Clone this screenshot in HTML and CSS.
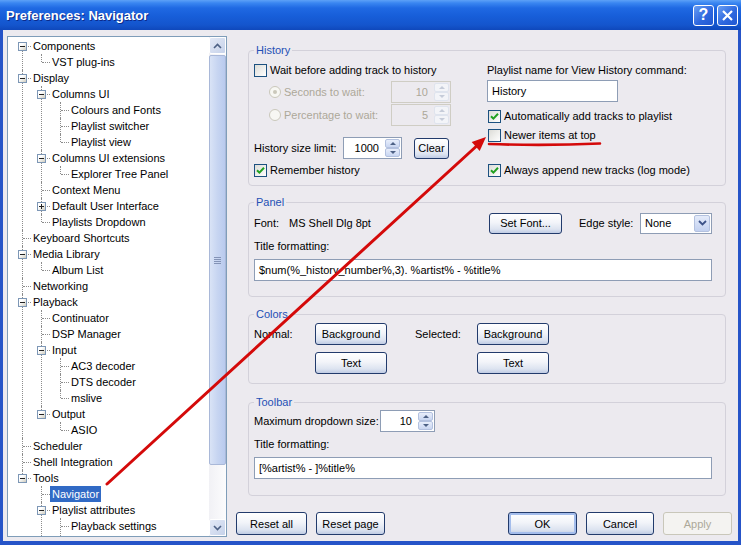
FILE: index.html
```html
<!DOCTYPE html>
<html lang="en">
<head>
	<meta charset="UTF-8">
	<title>Preferences: Navigator</title>
	<link rel="stylesheet" href="styles.css">
</head>
<body>
<div class="window">
	<div class="titlebar">
		<span class="title">Preferences: Navigator</span>
		<span class="capbtn">?</span>
		<span class="capbtn"><svg width="13" height="13" viewBox="0 0 13 13"><path d="M2 2L11 11M11 2L2 11" stroke="#fff" stroke-width="2.2"/></svg></span>
	</div>
	<div class="client">
		<div class="treebox">
			<div class="treeview">
				<ul class="tree root">
					<li><div class="row"><span class="exp minus"></span><span class="txt">Components</span></div>
						<ul><li class="last"><div class="row"><span class="txt">VST plug-ins</span></div></li></ul>
					</li>
					<li><div class="row"><span class="exp minus"></span><span class="txt">Display</span></div>
						<ul>
							<li><div class="row"><span class="exp minus"></span><span class="txt">Columns UI</span></div>
								<ul>
									<li><div class="row"><span class="txt">Colours and Fonts</span></div></li>
									<li><div class="row"><span class="txt">Playlist switcher</span></div></li>
									<li class="last"><div class="row"><span class="txt">Playlist view</span></div></li>
								</ul>
							</li>
							<li><div class="row"><span class="exp minus"></span><span class="txt">Columns UI extensions</span></div>
								<ul><li class="last"><div class="row"><span class="txt">Explorer Tree Panel</span></div></li></ul>
							</li>
							<li><div class="row"><span class="txt">Context Menu</span></div></li>
							<li><div class="row"><span class="exp plus"></span><span class="txt">Default User Interface</span></div></li>
							<li class="last"><div class="row"><span class="txt">Playlists Dropdown</span></div></li>
						</ul>
					</li>
					<li><div class="row"><span class="txt">Keyboard Shortcuts</span></div></li>
					<li><div class="row"><span class="exp minus"></span><span class="txt">Media Library</span></div>
						<ul><li class="last"><div class="row"><span class="txt">Album List</span></div></li></ul>
					</li>
					<li><div class="row"><span class="txt">Networking</span></div></li>
					<li><div class="row"><span class="exp minus"></span><span class="txt">Playback</span></div>
						<ul>
							<li><div class="row"><span class="txt">Continuator</span></div></li>
							<li><div class="row"><span class="txt">DSP Manager</span></div></li>
							<li><div class="row"><span class="exp minus"></span><span class="txt">Input</span></div>
								<ul>
									<li><div class="row"><span class="txt">AC3 decoder</span></div></li>
									<li><div class="row"><span class="txt">DTS decoder</span></div></li>
									<li class="last"><div class="row"><span class="txt">mslive</span></div></li>
								</ul>
							</li>
							<li class="last"><div class="row"><span class="exp minus"></span><span class="txt">Output</span></div>
								<ul><li class="last"><div class="row"><span class="txt">ASIO</span></div></li></ul>
							</li>
						</ul>
					</li>
					<li><div class="row"><span class="txt">Scheduler</span></div></li>
					<li><div class="row"><span class="txt">Shell Integration</span></div></li>
					<li class="last"><div class="row"><span class="exp minus"></span><span class="txt">Tools</span></div>
						<ul>
							<li class="sel"><div class="row"><span class="txt">Navigator</span></div></li>
							<li class="more"><div class="row"><span class="exp minus"></span><span class="txt">Playlist attributes</span></div>
								<ul><li class="more"><div class="row"><span class="txt">Playback settings</span></div></li></ul>
							</li>
						</ul>
					</li>
				</ul>
			</div>
			<div class="vscroll">
				<span class="sbtn"><svg width="9" height="6" viewBox="0 0 9 6"><path d="M1 5L4.5 1.5L8 5" stroke="#4d6185" stroke-width="1.6" fill="none"/></svg></span>
				<span class="thumb"><span class="grip"></span></span>
				<span class="track"></span>
				<span class="sbtn"><svg width="9" height="6" viewBox="0 0 9 6"><path d="M1 1L4.5 4.5L8 1" stroke="#4d6185" stroke-width="1.6" fill="none"/></svg></span>
			</div>
		</div>

		<div class="page">
			<fieldset class="group g-history">
				<legend>History</legend>
				<div class="cols">
					<div class="col-left">
						<div class="check"><span class="cb"></span>Wait before adding track to history</div>
						<div class="opt r1 disabled"><span class="radio on"></span><span class="opt-lbl">Seconds to wait:</span><span class="numbox w60"><span class="num">10</span><span class="spin"><span class="up"></span><span class="dn"></span></span></span></div>
						<div class="opt r2 disabled"><span class="radio"></span><span class="opt-lbl">Percentage to wait:</span><span class="numbox w60"><span class="num">5</span><span class="spin"><span class="up"></span><span class="dn"></span></span></span></div>
						<div class="size-row"><span class="lbl">History size limit:</span><span class="numbox w59"><span class="num">1000</span><span class="spin"><span class="up"></span><span class="dn"></span></span></span><span class="btn clear">Clear</span></div>
						<div class="check remember"><span class="cb"><svg width="9" height="9" viewBox="0 0 9 9"><path d="M1 4.2L3.4 6.6L8 1.8" stroke="#21a121" stroke-width="2" fill="none"/></svg></span>Remember history</div>
					</div>
					<div class="col-right">
						<div class="plabel">Playlist name for View History command:</div>
						<div class="textbox name">History</div>
						<div class="check auto"><span class="cb"><svg width="9" height="9" viewBox="0 0 9 9"><path d="M1 4.2L3.4 6.6L8 1.8" stroke="#21a121" stroke-width="2" fill="none"/></svg></span>Automatically add tracks to playlist</div>
						<div class="check newer"><span class="cb"></span>Newer items at top</div>
						<div class="check always"><span class="cb"><svg width="9" height="9" viewBox="0 0 9 9"><path d="M1 4.2L3.4 6.6L8 1.8" stroke="#21a121" stroke-width="2" fill="none"/></svg></span>Always append new tracks (log mode)</div>
					</div>
				</div>
			</fieldset>

			<fieldset class="group g-panel">
				<legend>Panel</legend>
				<div class="font-row">
					<span class="l1">Font:</span>
					<span class="l2">MS Shell Dlg 8pt</span>
					<span class="btn setfont">Set Font...</span>
					<span class="l3">Edge style:</span>
					<span class="select"><span>None</span><span class="ddbtn"><svg width="9" height="6" viewBox="0 0 9 6"><path d="M1 1L4.5 4.5L8 1" stroke="#3c5288" stroke-width="1.8" fill="none"/></svg></span></span>
				</div>
				<div class="flabel">Title formatting:</div>
				<div class="textbox wide">$num(%_history_number%,3). %artist% - %title%</div>
			</fieldset>

			<fieldset class="group g-colors">
				<legend>Colors</legend>
				<div class="color-grid">
					<span class="c1">Normal:</span>
					<span class="btn c2">Background</span>
					<span class="c4">Selected:</span>
					<span class="btn c5">Background</span>
					<span class="btn c2 r2">Text</span>
					<span class="btn c5 r2">Text</span>
				</div>
			</fieldset>

			<fieldset class="group g-toolbar">
				<legend>Toolbar</legend>
				<div class="dd-row"><span class="lbl">Maximum dropdown size:</span><span class="numbox w55"><span class="num">10</span><span class="spin"><span class="up"></span><span class="dn"></span></span></span></div>
				<div class="flabel">Title formatting:</div>
				<div class="textbox wide">[%artist% - ]%title%</div>
			</fieldset>

			<div class="actions">
				<span class="btn b-resetall">Reset all</span>
				<span class="btn b-resetpage">Reset page</span>
				<span class="btn b-ok">OK</span>
				<span class="btn b-cancel">Cancel</span>
				<span class="btn b-apply">Apply</span>
			</div>
		</div>
	</div>

	<svg class="marks" width="741" height="545" viewBox="0 0 741 545">
		<path d="M107 484L481 142" stroke="#d40a0a" stroke-width="3" fill="none" stroke-linecap="round"/>
		<polygon points="486,137 479.7,150.9 471.7,142.1" fill="#d40a0a"/>
		<path d="M489 144Q545 146 600 143.5" stroke="#d40a0a" stroke-width="2.6" fill="none" stroke-linecap="round"/>
	</svg>
</div>
</body>
</html>
```

FILE: styles.css
```css
*{box-sizing:border-box;}
body{margin:0;font-family:"Liberation Sans",Arial,sans-serif;font-size:11px;color:#000;}

.window{position:relative;width:741px;height:545px;display:flex;flex-direction:column;background:#2654c8;overflow:hidden;}
.titlebar{height:30px;flex:none;display:flex;align-items:center;padding:0 3px 0 6px;background:linear-gradient(#5da1f7 0,#3a86f1 3px,#1f69e3 8px,#175ed9 16px,#1455cd 25px,#0f48bb 30px);}
.title{flex:1;color:#fff;font-weight:bold;font-size:13px;text-shadow:1px 1px 0 #0c2a8a;}
.capbtn{width:21px;height:21px;margin-left:3px;border:1px solid #fff;border-radius:3px;background:linear-gradient(135deg,#6a9ff3,#2e68df 55%,#2158d2);display:flex;align-items:center;justify-content:center;color:#fff;font-weight:bold;font-size:16px;}

.client{flex:1;display:flex;margin:0 3px 4px;padding:6px 6px 0 4px;background:#eceaef;}

/* tree */
.treebox{width:220px;height:501px;border:1px solid #7f9db9;background:#fff;display:flex;}
.treeview{flex:1;overflow:hidden;padding-top:1px;}
.tree{list-style:none;margin:0;padding:0;}
.tree.root{padding-left:5px;}
.tree ul{list-style:none;margin:0;padding:0 0 0 19px;}
.tree li{position:relative;}
.tree li::before{content:'';position:absolute;left:9px;top:0;bottom:0;border-left:1px dotted #8c8c8c;}
.tree li.last::before{bottom:auto;height:8px;}
.tree li.more::before{bottom:-20px;}
.root>li:first-child::before{top:8px;}
.row{position:relative;height:16px;display:flex;align-items:center;padding-left:18px;white-space:nowrap;}
.row::before{content:'';position:absolute;left:10px;top:8px;width:8px;border-top:1px dotted #8c8c8c;}
.exp{position:absolute;left:5px;top:4px;width:9px;height:9px;border:1px solid #7d97b6;z-index:1;}
.exp.minus{background:linear-gradient(#222,#222) 1px 3px/5px 1px no-repeat,linear-gradient(135deg,#fff 35%,#cfccbe);}
.exp.plus{background:linear-gradient(#222,#222) 1px 3px/5px 1px no-repeat,linear-gradient(#222,#222) 3px 1px/1px 5px no-repeat,linear-gradient(135deg,#fff 35%,#cfccbe);}
.txt{padding:1px 2px;line-height:14px;}
.sel>.row .txt{background:#316ac5;color:#fff;}

.vscroll{width:17px;flex:none;display:flex;flex-direction:column;background:linear-gradient(90deg,#f1f1f5,#fcfcfd);}
.sbtn{height:17px;flex:none;display:flex;align-items:center;justify-content:center;border:1px solid #fff;border-radius:2px;background:linear-gradient(135deg,#e3e9f6,#c6d2ea);}
.thumb{height:410px;flex:none;margin-top:1px;border:1px solid #a9b8d8;border-radius:2px;background:linear-gradient(90deg,#d9e3f6,#c7d5f1 50%,#b9caee);display:flex;align-items:center;justify-content:center;}
.grip{width:7px;height:7px;background:repeating-linear-gradient(#8393b6 0 1px,transparent 1px 2px);}
.track{flex:1;}

/* right page */
.page{width:496px;margin-left:9px;display:flex;flex-direction:column;}
.group{margin:8px 6px 0 12px;padding:0 5px;border:1px solid #d3d1da;border-radius:4px;min-width:0;}
.group legend{padding:0 2px;color:#2450b5;line-height:13px;}
.g-history{height:142px;padding-top:5px;}
.g-panel{height:101px;margin-top:10px;padding-top:3px;}
.g-colors{height:76px;margin-top:11px;padding-top:2px;}
.g-toolbar{height:100px;margin-top:12px;padding-top:1px;}

.cols{display:flex;}
.col-left{width:233px;flex:none;}
.col-right{flex:1;}

.check{height:16px;display:flex;align-items:center;white-space:nowrap;}
.cb{width:13px;height:13px;flex:none;margin-right:3px;border:1px solid #1c5180;background:linear-gradient(135deg,#dcdcd7,#fff);display:flex;align-items:center;justify-content:center;}
.check.remember{margin-top:3px;}
.col-right .check{padding-left:1px;}
.check.auto{margin-top:6px;}
.check.newer{margin-top:3px;}
.check.always{margin-top:19px;}

.opt{height:22px;display:flex;align-items:center;padding-left:15px;}
.opt.r1{margin-top:3px;}
.opt.r2{margin-top:1px;}
.disabled{color:#aca899;}
.radio{width:12px;height:12px;flex:none;margin-right:3px;border:1px solid #cac8bb;border-radius:50%;background:#f7f7f3;display:flex;align-items:center;justify-content:center;}
.radio.on::after{content:'';width:4px;height:4px;border-radius:50%;background:#cac8bb;}
.opt-lbl{width:107px;}

.numbox{height:22px;flex:none;border:1px solid #8e9db5;background:#fff;display:flex;align-items:center;padding:0 1px 0 4px;}
.numbox .num{flex:1;text-align:right;padding-right:6px;}
.w60{width:60px;}
.w59{width:59px;}
.w55{width:55px;}
.disabled .numbox{border-color:#cfcdc4;background:#eceaef;}
.spin{width:15px;height:18px;display:flex;flex-direction:column;}
.spin span{flex:1;display:flex;align-items:center;justify-content:center;border:1px solid #b3c1df;border-radius:2px;background:linear-gradient(#e8eefb,#c9d6f1);}
.spin .up::after{content:'';border-left:3px solid transparent;border-right:3px solid transparent;border-bottom:3px solid #4d6185;}
.spin .dn::after{content:'';border-left:3px solid transparent;border-right:3px solid transparent;border-top:3px solid #4d6185;}
.disabled .spin span{border-color:#dfe4ee;background:#f3f4f8;}
.disabled .spin .up::after{border-bottom-color:#c6ccd9;}
.disabled .spin .dn::after{border-top-color:#c6ccd9;}

.size-row{height:22px;margin-top:11px;display:flex;align-items:center;}
.size-row .lbl{width:89px;}

.plabel{height:16px;line-height:16px;white-space:nowrap;}
.textbox{height:22px;border:1px solid #8e9db5;background:#fff;padding:0 4px;display:flex;align-items:center;white-space:nowrap;}
.textbox.name{width:131px;margin-top:2px;}
.textbox.wide{width:458px;margin-top:5px;}

.btn{display:flex;align-items:center;justify-content:center;white-space:nowrap;border:1px solid #223b6c;border-radius:3px;background:linear-gradient(#fff,#f2f4f9 45%,#dce3f0 80%,#c0cce4);}
.btn.clear{width:35px;height:21px;margin-left:12px;}

.font-row{height:22px;display:flex;align-items:center;}
.font-row .l1{width:35px;}
.font-row .l2{width:200px;}
.btn.setfont{width:73px;height:21px;}
.font-row .l3{width:61px;margin-left:17px;}
.select{width:72px;height:21px;border:1px solid #8e9db5;background:#fff;display:flex;align-items:center;padding:0 1px 0 4px;}
.select>span:first-child{flex:1;}
.ddbtn{width:16px;height:17px;display:flex;align-items:center;justify-content:center;border:1px solid #b3c1df;border-radius:2px;background:linear-gradient(#e4ebfa,#c3d1f0);}
.flabel{height:16px;line-height:16px;margin-top:4px;}

.color-grid{display:grid;grid-template-columns:61px 72px 28px 62px 72px;grid-template-rows:22px 22px;row-gap:7px;align-items:center;}
.color-grid .btn{height:22px;}
.c1{grid-column:1;grid-row:1;}
.c2{grid-column:2;grid-row:1;}
.c4{grid-column:4;grid-row:1;}
.c5{grid-column:5;grid-row:1;}
.color-grid .r2{grid-row:2;}

.dd-row{height:22px;display:flex;align-items:center;}
.dd-row .lbl{width:126px;}

.actions{height:23px;margin-top:16px;display:flex;}
.actions .btn{height:23px;}
.b-resetall{width:71px;}
.b-resetpage{width:69px;margin-left:9px;}
.b-ok{width:69px;margin-left:auto;box-shadow:inset 0 0 0 2px #a4bdec;}
.b-cancel{width:68px;margin-left:9px;}
.b-apply{width:69px;margin-left:9px;color:#aca899;border-color:#c9c7ba !important;background:#f4f3f1 !important;}

.marks{position:absolute;left:0;top:0;pointer-events:none;}
```
